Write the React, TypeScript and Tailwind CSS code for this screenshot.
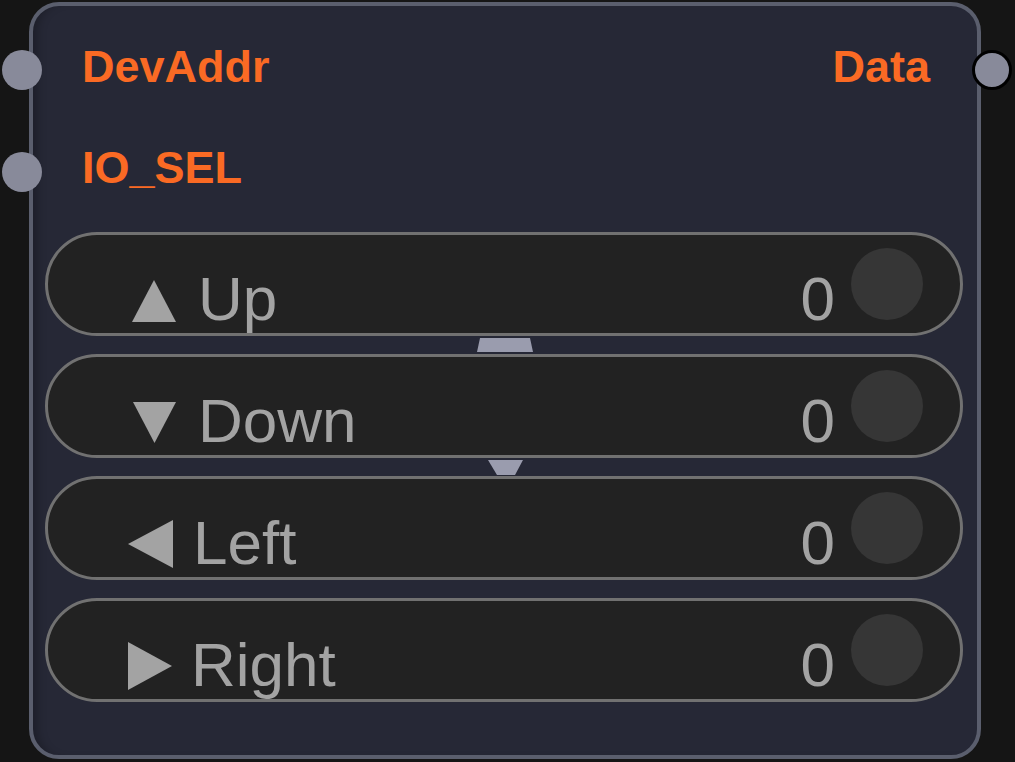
import React from 'react';

type Dir = 'up' | 'down' | 'left' | 'right';

interface Row {
  label: string;
  dir: Dir;
  textClass: string;
}

const rows: Row[] = [
  { label: 'Up', dir: 'up', textClass: 'ml-[20px]' },
  { label: 'Down', dir: 'down', textClass: 'ml-[20px]' },
  { label: 'Left', dir: 'left', textClass: 'ml-[15px]' },
  { label: 'Right', dir: 'right', textClass: 'ml-[13px]' },
];

const triangles: Record<Dir, string> = {
  up: '4,46 26,4 48,46',
  down: '5,4 48,4 26.5,45',
  left: '0,24 45,0 45,48',
  right: '0,0 44,24 0,48',
};

const Arrow: React.FC<{ dir: Dir }> = ({ dir }) => (
  <svg width="50" height="48" viewBox="0 0 50 48" className="mt-[41px] shrink-0">
    <polygon points={triangles[dir]} fill="#a3a3a3" />
  </svg>
);

const ToggleRow: React.FC<{ row: Row }> = ({ row }) => (
  <div className="flex items-start h-[104px] rounded-full border-[3px] border-[#717171] bg-[#222222] text-[#a3a3a3] text-[62px] leading-[62px]">
    <div className="ml-[80px] flex">
      <Arrow dir={row.dir} />
    </div>
    <span className={`mt-[33px] ${row.textClass}`}>{row.label}</span>
    <span className="ml-auto mt-[33px]">0</span>
    <div className="ml-[16px] mr-[37px] mt-[13px] w-[72px] h-[72px] rounded-full bg-[#363636]" />
  </div>
);

const Connector: React.FC<{ kind: 'up' | 'down' }> = ({ kind }) => (
  <div className="h-[18px] flex">
    <svg width="58" height="18" viewBox="0 0 58 18" className="ml-[431px]">
      {kind === 'up' ? (
        <polygon points="4,2 54,2 57,16 1,16" fill="#9a9cae" />
      ) : (
        <polygon points="12,2 47,2 39,17 21,17" fill="#9a9cae" />
      )}
    </svg>
  </div>
);

export default function App() {
  return (
    <div className="w-[1015px] h-[762px] bg-[#151515] overflow-hidden" style={{ fontFamily: '"Liberation Sans", Arial, sans-serif' }}>
      <div className="relative ml-[29px] mt-[2px] w-[952px] h-[757px] rounded-[30px] border-4 border-[#5a5e6d] bg-[#262836] shadow-[inset_10px_0_10px_-6px_rgba(0,0,0,0.25)]">
        {/* pins */}
        <div className="absolute left-[-31px] top-[44px] w-[40px] h-[40px] rounded-full bg-[#888a9a]" />
        <div className="absolute left-[-31px] top-[146px] w-[40px] h-[40px] rounded-full bg-[#888a9a]" />
        <div className="absolute left-[939px] top-[44px] w-[40px] h-[40px] rounded-full bg-[#888a9a] border-[3px] border-black" />

        <div className="flex justify-between pt-[35px] pl-[49px] pr-[47px] text-[45px] leading-[52px] font-bold text-[#fa6a24]">
          <span>DevAddr</span>
          <span>Data</span>
        </div>
        <div className="mt-[49px] pl-[49px] text-[45px] leading-[52px] font-bold text-[#fa6a24]">
          IO_SEL
        </div>

        <div className="mt-[38px] ml-[12px] mr-[14px] flex flex-col">
          <ToggleRow row={rows[0]} />
          <Connector kind="up" />
          <ToggleRow row={rows[1]} />
          <Connector kind="down" />
          <ToggleRow row={rows[2]} />
          <div className="h-[18px]" />
          <ToggleRow row={rows[3]} />
        </div>
      </div>
    </div>
  );
}
